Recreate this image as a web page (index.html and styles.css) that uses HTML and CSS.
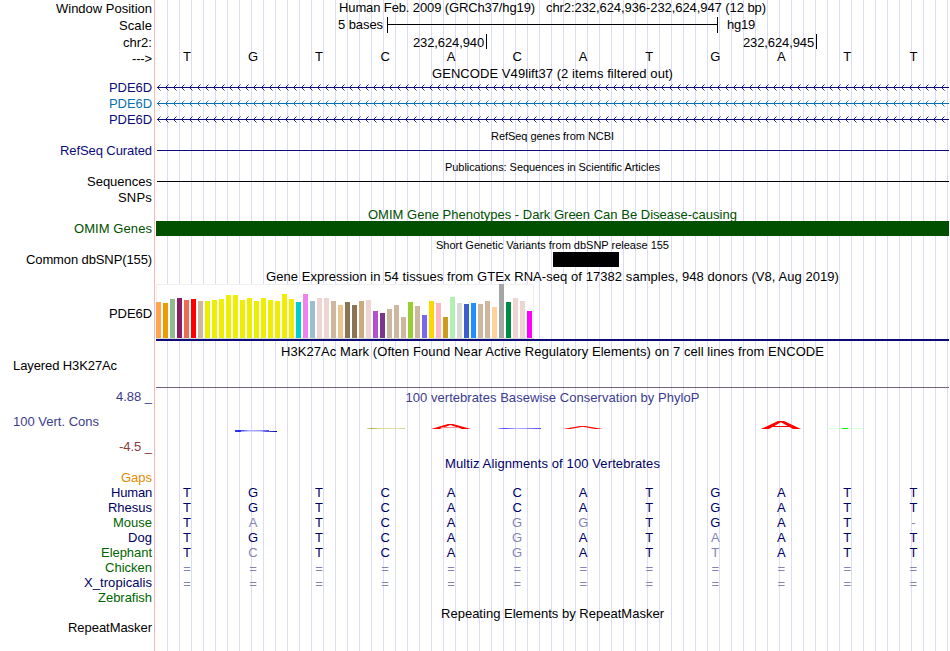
FILE: index.html
```html
<!DOCTYPE html>
<html lang="en">
<head>
<meta charset="utf-8">
<title>chr2:232,624,936-232,624,947</title>
<link rel="stylesheet" href="styles.css">
</head>
<body>
<main class="browser">

<section class="track position">
  <div class="labels">
    <div class="h17"><span data-w="96">Window Position</span></div>
    <div class="h17"><span data-w="33">Scale</span></div>
    <div class="h16"><span data-w="29">chr2:</span></div>
    <div><span data-w="20">---&gt;</span></div>
  </div>
  <div class="data">
    <h2><span data-w="196">Human Feb. 2009 (GRCh37/hg19)</span><span class="range" data-w="220">chr2:232,624,936-232,624,947 (12 bp)</span></h2>
    <div class="scale"><span class="bases-text" data-w="45">5 bases</span><div class="ruler"></div><span data-w="28">hg19</span></div>
    <div class="ticks"><span class="tick" data-w="71">232,624,940</span><span class="tick" data-w="71">232,624,945</span></div>
    <div class="bases" data-seq="TGTCACATGATT"></div>
  </div>
</section>

<section class="track gencode">
  <div class="labels navy">
    <div class="h16"><span data-w="43">PDE6D</span></div>
    <div class="h16 sky"><span data-w="43">PDE6D</span></div>
    <div class="h16"><span data-w="43">PDE6D</span></div>
  </div>
  <div class="data">
    <h2><span data-w="241">GENCODE V49lift37 (2 items filtered out)</span></h2>
    <div class="intron navy"></div>
    <div class="intron sky"></div>
    <div class="intron navy"></div>
  </div>
</section>

<section class="track refseq">
  <div class="labels navy"><div><span data-w="92">RefSeq Curated</span></div></div>
  <div class="data">
    <h2 class="small"><span data-w="123">RefSeq genes from NCBI</span></h2>
    <div class="line navy"></div>
  </div>
</section>

<section class="track pubs">
  <div class="labels"><div class="h16"><span data-w="65">Sequences</span></div><div><span data-w="34">SNPs</span></div></div>
  <div class="data">
    <h2 class="small"><span data-w="215">Publications: Sequences in Scientific Articles</span></h2>
    <div class="line"></div>
  </div>
</section>

<section class="track omim">
  <div class="labels green"><div><span data-w="78">OMIM Genes</span></div></div>
  <div class="data">
    <h2 class="green"><span data-w="369">OMIM Gene Phenotypes - Dark Green Can Be Disease-causing</span></h2>
    <div class="gene-bar"></div>
  </div>
</section>

<section class="track dbsnp">
  <div class="labels"><div><span data-w="126">Common dbSNP(155)</span></div></div>
  <div class="data">
    <h2 class="small"><span data-w="233">Short Genetic Variants from dbSNP release 155</span></h2>
    <div class="variant"></div>
  </div>
</section>

<section class="track gtex">
  <div class="labels"><div><span data-w="43">PDE6D</span></div></div>
  <div class="data">
    <h2><span data-w="573">Gene Expression in 54 tissues from GTEx RNA-seq of 17382 samples, 948 donors (V8, Aug 2019)</span></h2>
    <div class="bars" id="bars"></div>
    <div class="model"></div>
  </div>
</section>

<section class="track h3k">
  <div class="labels left"><div><span data-w="104">Layered H3K27Ac</span></div></div>
  <div class="data">
    <h2><span data-w="543">H3K27Ac Mark (Often Found Near Active Regulatory Elements) on 7 cell lines from ENCODE</span></h2>
    <div class="baseline"></div>
  </div>
</section>

<section class="track cons">
  <div class="labels indigo">
    <div class="h25"><span data-w="36">4.88 _</span></div>
    <div class="h25 left"><span data-w="86">100 Vert. Cons</span></div>
    <div class="maroon"><span data-w="33">-4.5 _</span></div>
  </div>
  <div class="data">
    <h2 class="indigo"><span data-w="294">100 vertebrates Basewise Conservation by PhyloP</span></h2>
    <svg class="logo" width="793" height="20" viewBox="156 416 793 20">
      <defs>
        <linearGradient id="g1" gradientUnits="userSpaceOnUse" x1="234" x2="277"><stop offset="0" stop-color="#4444f8"/><stop offset=".12" stop-color="#2222f4"/><stop offset=".35" stop-color="#b0b0ff"/><stop offset=".6" stop-color="#9a9aff"/><stop offset="1" stop-color="#0000b8"/></linearGradient>
        <linearGradient id="g2"><stop offset="0" stop-color="#dcdca0"/><stop offset=".12" stop-color="#b0b030"/><stop offset=".3" stop-color="#d8d890"/><stop offset=".8" stop-color="#e4e4b0"/><stop offset="1" stop-color="#d0d080"/></linearGradient>
        <linearGradient id="g3"><stop offset="0" stop-color="#aaaaff"/><stop offset=".15" stop-color="#4848ff"/><stop offset=".45" stop-color="#b8b8ff"/><stop offset="1" stop-color="#4848ff"/></linearGradient>
      </defs>
      <path d="M235 430h34v1h8v1h-14v-.5h-22v.5h-6z" fill="url(#g1)"/>
      <rect x="367" y="428" width="38" height="1" fill="url(#g2)"/>
      <path d="M431 429l17-5h5l18 5h-9l-11.500-4l-11 4z" fill="#f00"/>
      <rect x="441" y="427" width="18" height="1" fill="#f88"/>
      <rect x="498" y="428" width="43" height="1" fill="url(#g3)"/>
      <path d="M563 429l17-3h5l18 3h-8l-12.500-2.200l-12 2.200z" fill="#f00"/>
      <path d="M761 429l17-8h6l17 8h-8l-12-6.800l-12 6.800z" fill="#f00"/>
      <rect x="770" y="426" width="21" height="1" fill="#f00"/>
      <rect x="827" y="428" width="36" height="1" fill="#d8ffd8"/>
      <rect x="842" y="428" width="6" height="1" fill="#0f0"/>
    </svg>
  </div>
</section>

<section class="track multiz">
  <div class="labels navy2">
    <div class="orange"><span data-w="31">Gaps</span></div>
    <div><span data-w="41">Human</span></div>
    <div><span data-w="44">Rhesus</span></div>
    <div class="forest"><span data-w="39">Mouse</span></div>
    <div><span data-w="24">Dog</span></div>
    <div class="forest"><span data-w="51">Elephant</span></div>
    <div class="forest"><span data-w="47">Chicken</span></div>
    <div><span data-w="68">X_tropicalis</span></div>
    <div class="forest"><span data-w="54">Zebrafish</span></div>
  </div>
  <div class="data navy2">
    <h2><span data-w="215">Multiz Alignments of 100 Vertebrates</span></h2>
    <div class="align">
      <div class="bases" data-seq="TGTCACATGATT"></div>
      <div class="bases" data-seq="TGTCACATGATT"></div>
      <div class="bases" data-seq="TATCAGGTGAT-"></div>
      <div class="bases" data-seq="TGTCAGATAATT"></div>
      <div class="bases" data-seq="TCTCAGATTATT"></div>
      <div class="bases unaligned" data-seq="============"></div>
      <div class="bases unaligned" data-seq="============"></div>
    </div>
  </div>
</section>

<section class="track rmsk">
  <div class="labels"><div><span data-w="84">RepeatMasker</span></div></div>
  <div class="data"><h2><span data-w="223">Repeating Elements by RepeatMasker</span></h2></div>
</section>

</main>
<script src="tracks.js"></script>
</body>
</html>
```
FILE: styles.css
```css
* { box-sizing: border-box; }
body { margin: 0; background: #fff; }

.browser {
  width: 949px;
  height: 651px;
  overflow: hidden;
  font: 13px/15px "Liberation Sans", Arial, sans-serif;
  color: #000;
  white-space: nowrap;
  background:
    linear-gradient(#ffb4b4, #ffb4b4) 154px 0 / 1px 100% no-repeat,
    repeating-linear-gradient(90deg, #dcdcf8 0 1px, transparent 1px 12px) 167px 0 / 782px 100% no-repeat,
    #fff;
}

.track { display: flex; }
.labels { width: 156px; padding-right: 4px; text-align: right; flex: none; }
.labels > div { height: 15px; }
.labels > .h16 { height: 16px; }
.labels > .h17 { height: 17px; }
.labels > .h25 { height: 25px; }
.labels.left, .labels .left { text-align: left; padding-left: 13px; }
.data { width: 793px; flex: none; }
h2 { margin: 0; font: inherit; height: 15px; text-align: center; }
h2.small { font-size: 11px; line-height: 16px; }

.navy { color: #0c0c78; }
.navy2 { color: #000064; }
.sky { color: #0c70b0; }
.green { color: #005000; }
.forest { color: #006400; }
.orange { color: #e68a00; }
.indigo { color: #3c3c8c; }
.maroon { color: #8c3c3c; }

.position { height: 66px; }
.position .labels { padding-top: 1px; }
.range { margin-left: 11px; }
.scale { display: flex; height: 17px; padding: 2px 0 0 182px; }
.bases-text { width: 49px; }
.ruler {
  width: 331px;
  height: 16px;
  margin-right: 9px;
  border: solid #000;
  border-width: 0 1px;
  background: linear-gradient(#000, #000) 0 7px / 100% 1px no-repeat;
}
.ticks { display: flex; height: 17px; padding: 2px 0 0 257px; gap: 256px; }
.tick { width: 74px; height: 15px; border-right: 1px solid #000; line-height: 17px; }
.bases {
  display: grid;
  grid-template-columns: repeat(12, 66.04px);
  height: 15px;
  margin-left: -2px;
  text-align: center;
}
.unaligned { line-height: 17px; }
.diff { color: #8484b4; }

.gencode { height: 62px; }
.gencode .labels { padding-top: 14px; }
.gencode h2 { height: 14px; }
.intron { height: 16px; overflow: hidden; }
.intron svg { display: block; }

.refseq { height: 31px; }
.refseq .labels, .pubs .labels, .dbsnp .labels { padding-top: 15px; }
.line { height: 1px; margin: 7px 0 0 1px; background: currentColor; }
.pubs { height: 48px; }

.omim { height: 30px; }
.omim .labels { padding-top: 14px; }
.omim h2 { height: 14px; }
.gene-bar { height: 15px; background: #005000; }

.dbsnp { height: 32px; }
.variant { width: 66px; height: 15px; margin-left: 397px; background: #000; }

.gtex { height: 75px; }
.gtex .labels { padding-top: 37px; }
.bars {
  display: flex;
  align-items: flex-end;
  gap: 2px;
  width: 378px;
  height: 55px;
  background: #fff;
  border-bottom: 1px solid #d8d8d8;
  box-shadow: inset 0 1px #f0f0f0, inset -1px 0 #f0f0f0, inset 1px 0 #f0f0f0;
}
.bar { width: 5px; }
.model { height: 2px; background: #0c0c78; }

.h3k { height: 45px; }
.h3k .labels { padding-top: 14px; }
.baseline { height: 1px; margin-top: 28px; background: #786080; }

.cons { height: 67px; }
.cons .data { padding-top: 1px; }
.logo { display: block; margin-top: 11px; }

.multiz { height: 150px; }
.multiz .labels { padding-top: 14px; }
.align { padding-top: 14px; }

.rmsk .labels { padding-top: 14px; }
```
FILE: tracks.js
```js
// Bases: letters that differ from the human reference are drawn lighter.
const reference = "TGTCACATGATT";
document.querySelectorAll(".bases").forEach(row => {
  [...row.dataset.seq].forEach((base, i) => {
    const cell = document.createElement("span");
    cell.textContent = base;
    if (base !== reference[i]) cell.className = "diff";
    row.append(cell);
  });
});

// Median expression per tissue: [height, colour]
const tan = "#cdb79e", yellow = "#eeee00", pink = "#eed5d2";
const tissues = [
  [36, "#ffa54f"], [35, "#ee9a00"], [39, "#8fbc8f"], [40, "#8b1c62"], [38, "#ee6a50"],
  [39, "#ff0000"], [37, tan],
  ...[37, 38, 39, 43, 43, 38, 40, 37, 40, 38, 37, 44, 39].map(h => [h, yellow]),
  [36, "#00cdcd"], [44, "#ee82ee"], [37, "#9ac0cd"], [40, pink], [40, pink], [37, tan],
  [33, "#eec591"], [36, "#8b7355"], [33, "#8b7355"], [37, "#cdaa7d"], [38, pink],
  [27, "#b452cd"], [25, "#7a378b"], [29, tan], [33, tan], [21, tan], [36, "#9acd32"],
  [32, tan], [23, "#7a67ee"], [37, "#ffd700"], [35, "#ffb6c1"], [21, "#cd9b1d"],
  [41, "#b4eeb4"], [35, "#d9d9d9"], [34, "#3a5fcd"], [35, "#1e90ff"], [34, tan],
  [37, tan], [31, "#ffd39b"], [54, "#a6a6a6"], [36, "#008b45"], [40, pink], [37, pink],
  [27, "#ff00ff"]
];
const bars = document.getElementById("bars");
tissues.forEach(([height, colour]) => {
  const bar = document.createElement("div");
  bar.className = "bar";
  bar.style.height = height + "px";
  bar.style.background = colour;
  bars.append(bar);
});

// Introns: a line with strand arrows every 8px.
document.querySelectorAll(".intron").forEach(row => {
  let arrows = "";
  for (let x = 1; x < 793; x += 8) arrows += `M${x + 3.5} 4.500L${x + 0.5} 7.500L${x + 3.5} 10.500`;
  row.innerHTML = `<svg width="793" height="16"><path d="M1 7.500H793" stroke="currentColor"/>` +
    `<path d="${arrows}" fill="none" stroke="currentColor" stroke-width=".9"/></svg>`;
});

// Track captions keep a fixed advance width.
document.querySelectorAll("[data-w]").forEach(el => {
  const range = document.createRange();
  range.selectNodeContents(el);
  const natural = range.getBoundingClientRect().width;
  el.style.letterSpacing = (el.dataset.w - natural) / el.textContent.length + "px";
});
```
